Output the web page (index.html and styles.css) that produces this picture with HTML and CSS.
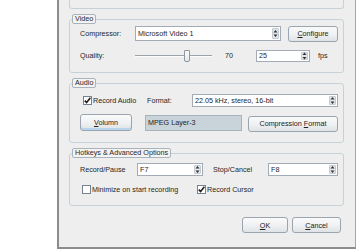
FILE: index.html
```html
<!DOCTYPE html>
<html lang="en">
<head>
    <meta charset="UTF-8">
    <title>Recording Options</title>
    <link rel="stylesheet" href="styles.css">
</head>
<body>
    <div class="dialog">
        <div class="group group-top"></div>

        <fieldset class="group group-video">
            <legend>Video</legend>
            <div class="row row-compressor">
                <span class="label label-video">Compressor:</span>
                <div class="combo combo-tall combo-compressor">
                    <span class="combo-text">Microsoft Video 1</span>
                    <span class="spin"><svg width="5" height="9" viewBox="0 0 5 9"><path d="M2.5 1 L4.5 3.5 L0.5 3.5 Z M0.5 5.5 L4.5 5.5 L2.5 8 Z" fill="#333"/></svg></span>
                </div>
                <button class="btn btn-configure"><u>C</u>onfigure</button>
            </div>
            <div class="row row-quality">
                <span class="label label-video">Quality:</span>
                <div class="slider">
                    <span class="track track-left"></span>
                    <span class="thumb"></span>
                    <span class="track track-right"></span>
                </div>
                <span class="value">70</span>
                <div class="combo combo-fps">
                    <span class="combo-text">25</span>
                    <span class="spin"><svg width="5" height="8" viewBox="0 0 5 8"><path d="M2.5 0.5 L4.5 3 L0.5 3 Z M0.5 5 L4.5 5 L2.5 7.5 Z" fill="#333"/></svg></span>
                </div>
                <span class="unit">fps</span>
            </div>
        </fieldset>

        <fieldset class="group group-audio">
            <legend>Audio</legend>
            <div class="row row-format">
                <label class="check-item check-audio">
                    <span class="check"><svg width="7" height="7" viewBox="0 0 7 7"><path d="M0.8 3.6 L2.6 5.6 L6.4 0.8" stroke="#1d1d1d" stroke-width="1.6" fill="none"/></svg></span>
                    Record Audio
                </label>
                <span class="label label-format">Format:</span>
                <div class="combo combo-format">
                    <span class="combo-text">22.05 kHz, stereo, 16-bit</span>
                    <span class="spin"><svg width="5" height="9" viewBox="0 0 5 9"><path d="M2.5 1 L4.5 3.5 L0.5 3.5 Z M0.5 5.5 L4.5 5.5 L2.5 8 Z" fill="#333"/></svg></span>
                </div>
            </div>
            <div class="row row-codec">
                <button class="btn btn-volume"><u>V</u>olumn</button>
                <div class="codec">MPEG Layer-3</div>
                <button class="btn btn-compression">Compression <u>F</u>ormat</button>
            </div>
        </fieldset>

        <fieldset class="group group-hotkeys">
            <legend>Hotkeys &amp; Advanced Options</legend>
            <div class="row row-keys">
                <span class="label label-record">Record/Pause</span>
                <div class="combo combo-f7">
                    <span class="combo-text">F7</span>
                    <span class="spin"><svg width="5" height="9" viewBox="0 0 5 9"><path d="M2.5 1 L4.5 3.5 L0.5 3.5 Z M0.5 5.5 L4.5 5.5 L2.5 8 Z" fill="#333"/></svg></span>
                </div>
                <span class="label label-stop">Stop/Cancel</span>
                <div class="combo combo-f8">
                    <span class="combo-text">F8</span>
                    <span class="spin"><svg width="5" height="9" viewBox="0 0 5 9"><path d="M2.5 1 L4.5 3.5 L0.5 3.5 Z M0.5 5.5 L4.5 5.5 L2.5 8 Z" fill="#333"/></svg></span>
                </div>
            </div>
            <div class="row row-options">
                <label class="check-item check-minimize">
                    <span class="check"></span>
                    Minimize on start recording
                </label>
                <label class="check-item">
                    <span class="check"><svg width="7" height="7" viewBox="0 0 7 7"><path d="M0.8 3.6 L2.6 5.6 L6.4 0.8" stroke="#1d1d1d" stroke-width="1.6" fill="none"/></svg></span>
                    Record Cursor
                </label>
            </div>
        </fieldset>

        <div class="actions">
            <button class="btn btn-ok"><u>O</u>K</button>
            <button class="btn btn-cancel"><u>C</u>ancel</button>
        </div>
    </div>
</body>
</html>
```

FILE: styles.css
```css
body {
    margin: 0;
    background: #fff;
    font-family: 'Liberation Sans', Arial, sans-serif;
    font-size: 7.2px;
    color: #262626;
}
.dialog {
    margin-left: 57px;
    width: 299px;
    height: 249px;
    box-sizing: border-box;
    padding: 0 10px;
    background: #eeeeee;
    border-left: 2px solid #8c8c8c;
    border-right: 1px solid #a6a6a6;
    border-bottom: 2px solid #8c8c8c;
    overflow: hidden;
}
.group {
    box-sizing: border-box;
    width: 275px;
    min-width: 0;
    margin: 0 0 5px;
    padding: 0;
    border: 1px solid #c6d2da;
    border-radius: 3px;
}
.group-top {
    height: 9px;
    border-top: none;
    border-radius: 0 0 3px 3px;
}
legend {
    box-sizing: border-box;
    height: 10px;
    margin-left: 2px;
    padding: 0 2px;
    line-height: 8px;
    border: 1px solid #a9b3bb;
    border-radius: 2px;
    background: #f3f3f3;
}
.group-video { padding-bottom: 10px; }
.group-audio { padding-bottom: 11px; }
.group-hotkeys { padding-bottom: 10px; }

.row {
    display: flex;
    align-items: center;
    padding-left: 10px;
}
.row-compressor { margin-top: 1px; height: 17px; }
.row-quality { margin-top: 7px; height: 13px; }
.row-format { margin-top: 6px; height: 13px; }
.row-codec { margin-top: 7px; height: 17px; }
.row-keys { margin-top: 5px; height: 13px; }
.row-options { margin-top: 7px; height: 12px; }

.label { flex: none; }
.label-video { width: 55px; }
.label-format { width: 45px; }
.label-record { width: 57px; }
.label-stop { width: 55px; margin-left: 10px; }

.combo {
    flex: none;
    box-sizing: border-box;
    height: 13px;
    display: flex;
    align-items: center;
    justify-content: space-between;
    padding: 0 1px 0 2px;
    background: #fff;
    border: 1px solid #a3acb6;
    color: #1e1e1e;
}
.combo-tall { height: 15px; }
.combo-compressor { width: 146px; }
.combo-fps { width: 54px; height: 12px; }
.combo-format { width: 146px; }
.combo-f7 { width: 66px; }
.combo-f8 { width: 70px; }
.spin {
    box-sizing: border-box;
    width: 7px;
    height: calc(100% - 2px);
    display: flex;
    align-items: center;
    justify-content: center;
    background: #e2e6eb;
    border: 1px solid #c3cad2;
    border-radius: 1px;
}

.slider {
    flex: none;
    width: 77px;
    height: 13px;
    display: flex;
    align-items: center;
}
.track {
    height: 0;
    border-top: 1px solid #9ba2a8;
    border-bottom: 1px solid #fdfdfd;
}
.track-left { width: 49px; }
.track-right { width: 22px; }
.thumb {
    box-sizing: border-box;
    width: 6px;
    height: 12px;
    background: linear-gradient(#fbfbfb, #e4e7ea);
    border: 1px solid #8d98a2;
    border-radius: 1px 1px 2px 2px;
}
.value {
    flex: none;
    width: 31px;
    padding-left: 13px;
}
.unit { margin-left: 8px; }

.btn {
    flex: none;
    box-sizing: border-box;
    height: 16px;
    padding: 0;
    font: inherit;
    color: #222;
    border: 1px solid #9aa5b0;
    border-radius: 3px;
    background: linear-gradient(#fafafa 0%, #eef0f2 55%, #dfe3e7 100%);
}
.btn-configure { width: 50px; height: 16px; margin-left: 7px; }
.btn-volume { width: 52px; height: 17px; box-shadow: inset 0 -2px 0 #b8d4ec; }
.btn-compression { width: 90px; margin-left: 6px; margin-top: 2px; }
.btn-ok { width: 46px; }
.btn-cancel { width: 49px; margin-left: 4px; }

.codec {
    flex: none;
    box-sizing: border-box;
    width: 97px;
    height: 16px;
    margin-left: 13px;
    padding-left: 2px;
    line-height: 14px;
    background: #c9d3da;
    border: 1px solid #a8b4bd;
    color: #1e1e1e;
}

.check-item {
    flex: none;
    display: flex;
    align-items: center;
    gap: 1px;
}
.check-audio { width: 64px; margin-left: 3px; }
.check-minimize { width: 115px; margin-left: 2px; }
.check {
    box-sizing: border-box;
    width: 9px;
    height: 9px;
    display: flex;
    align-items: center;
    justify-content: center;
    background: #fff;
    border: 1px solid #76828d;
}

.actions {
    display: flex;
    justify-content: flex-end;
    width: 275px;
    box-sizing: border-box;
    padding-right: 3px;
    margin-top: 11px;
}
```
